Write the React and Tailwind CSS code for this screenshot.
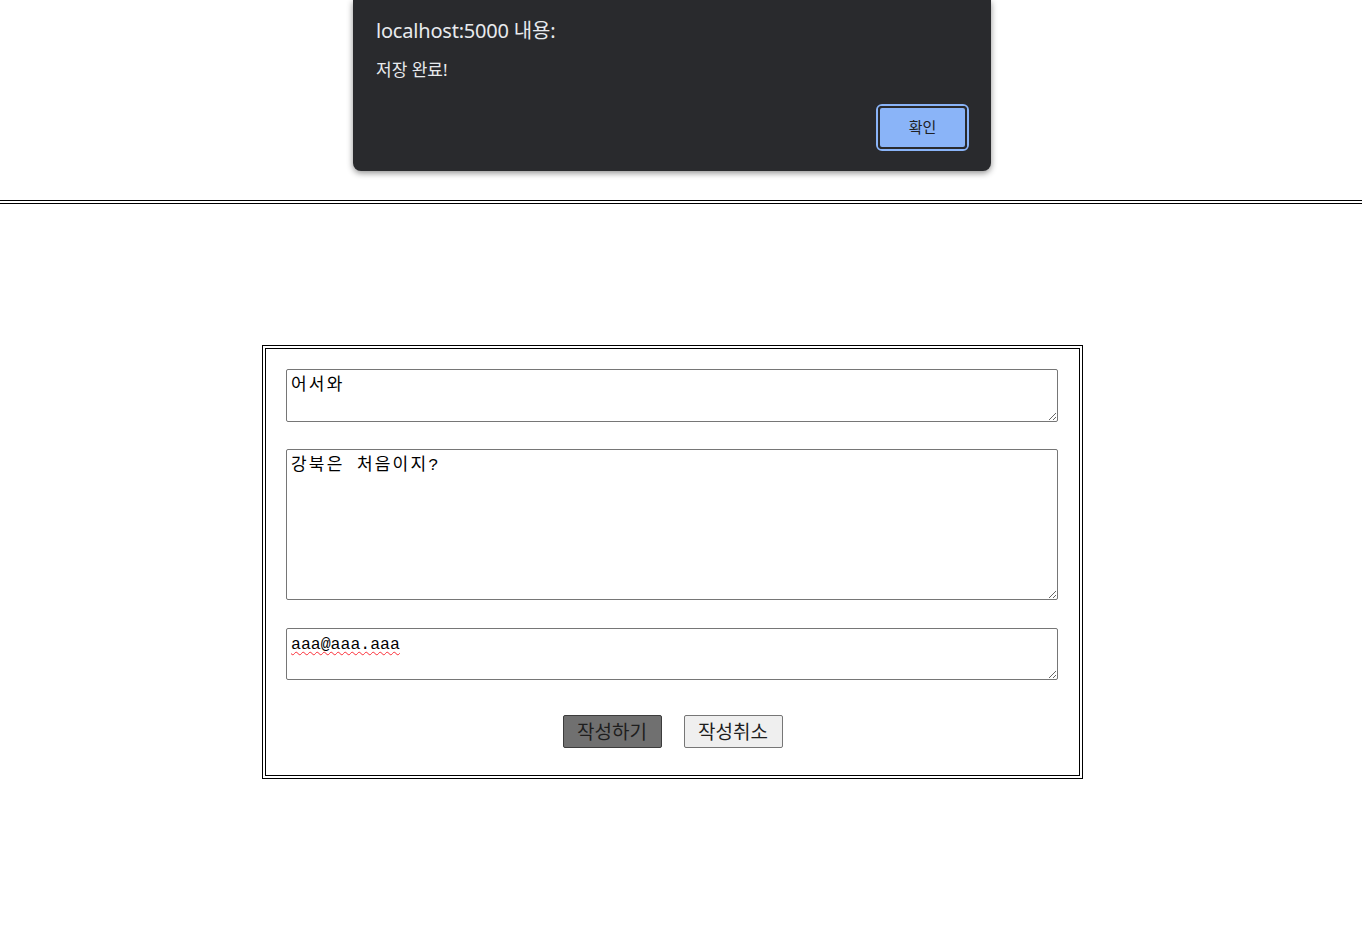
import React from 'react';

const monoKr = { fontFamily: '"Liberation Mono", "Noto Sans CJK KR", monospace' };

const AlertDialog = () => {
  return (
    <div className="absolute left-[353px] top-0 w-[638px] h-[171px] bg-[#292a2d] rounded-b-lg shadow-[0_2px_6px_rgba(0,0,0,0.45)] font-['Noto_Sans','Noto_Sans_CJK_KR',sans-serif]">
      <div className="pl-[23px] pt-[18px] text-[20px] leading-[26px] text-[#e8eaed] tracking-[-0.2px]">localhost:5000 내용:</div>
      <div className="pl-[23px] pt-[15px] text-[17px] leading-[22px] text-[#e8eaed]">저장 완료!</div>
      <div className="absolute left-[523px] top-[104px] w-[93px] h-[47px] rounded-[6px] border-2 border-[#8ab4f8]">
        <button className="w-full h-full rounded-[4px] border-2 border-[#292a2d] bg-[#8ab4f8] text-[15px] text-[#202124]">확인</button>
      </div>
    </div>
  );
};

const App = () => {
  return (
    <div className="relative w-[1362px] h-[937px] bg-white">
      <div className="pt-[200px]">
        <div className="border-t border-b border-black h-[4px]"></div>
      </div>

      <div className="ml-[262px] mt-[141px] w-[821px] border border-black p-[2px]">
        <div className="border border-black px-5 pt-5 pb-[27px]">
          <textarea
            defaultValue="어서와"
            spellCheck={false}
            className="block w-[772px] h-[53px] border border-[#767676] rounded-[2px] px-[4px] pt-[5px] pb-[3px] text-[17px] leading-[22px] tracking-[2.2px] text-black outline-none"
            style={monoKr}
          />
          <textarea
            defaultValue="강북은 처음이지?"
            spellCheck={false}
            className="block mt-[27px] w-[772px] h-[151px] border border-[#767676] rounded-[2px] px-[4px] pt-[5px] pb-[3px] text-[17px] leading-[22px] tracking-[2.2px] text-black outline-none"
            style={monoKr}
          />
          <textarea
            defaultValue="aaa@aaa.aaa"
            spellCheck={false}
            className="block mt-[28px] w-[772px] h-[52px] border border-[#767676] rounded-[2px] px-[4px] pt-[5px] pb-[3px] text-[16.5px] leading-[22px] text-black outline-none underline decoration-wavy decoration-red-500 decoration-1 underline-offset-2"
            style={monoKr}
          />
          <div className="flex justify-center gap-[22px] mt-[35px]">
            <button className="w-[99px] h-[33px] bg-[#707070] border border-[#3c3c3c] rounded-[2px] text-[19px] text-[#1e1e1e] font-['Noto_Sans_CJK_KR',sans-serif]">작성하기</button>
            <button className="w-[99px] h-[33px] bg-[#efefef] border border-[#767676] rounded-[2px] text-[19px] text-[#1e1e1e] font-['Noto_Sans_CJK_KR',sans-serif]">작성취소</button>
          </div>
        </div>
      </div>

      <AlertDialog />
    </div>
  );
};

export default App;
